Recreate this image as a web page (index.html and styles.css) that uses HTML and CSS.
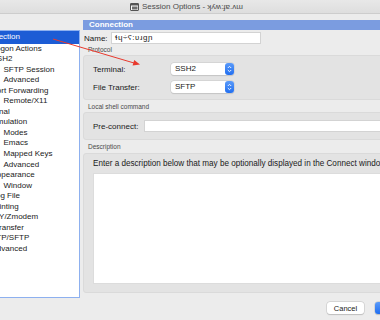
FILE: index.html
```html
<!DOCTYPE html>
<html lang="en">
<head>
  <meta charset="UTF-8" />
  <title>Session Options</title>
  <meta name="viewport" content="width=device-width, initial-scale=1.0" />
  <link rel="stylesheet" href="styles.css">
</head>
<body>
  <div class="window">
    <div class="titlebar">
      <svg class="title-icon" width="9" height="8" viewBox="0 0 9 8">
        <rect x="0.5" y="0.5" width="8" height="7" rx="0.5" fill="#fff" stroke="#555"/>
        <rect x="0.5" y="0.5" width="8" height="2" fill="#555"/>
        <rect x="2" y="3.5" width="5.5" height="3" fill="#6d6d6d"/>
      </svg>
      <span>Session Options - ʞʎʍ:ɟɐ.ʌɯ</span>
    </div>

    <div class="main">
      <ul class="tree">
        <li class="l0 selected">Connection</li>
        <li class="l1">Logon Actions</li>
        <li class="l1">SSH2</li>
        <li class="l2">SFTP Session</li>
        <li class="l2">Advanced</li>
        <li class="l1">Port Forwarding</li>
        <li class="l2">Remote/X11</li>
        <li class="l0">Terminal</li>
        <li class="l1">Emulation</li>
        <li class="l2">Modes</li>
        <li class="l2">Emacs</li>
        <li class="l2">Mapped Keys</li>
        <li class="l2">Advanced</li>
        <li class="l1">Appearance</li>
        <li class="l2">Window</li>
        <li class="l1">Log File</li>
        <li class="l1">Printing</li>
        <li class="l1">X/Y/Zmodem</li>
        <li class="l0">File Transfer</li>
        <li class="l1">FTP/SFTP</li>
        <li class="l1">Advanced</li>
      </ul>

      <div class="panel">
        <div class="panel-header">Connection</div>

        <div class="name-row">
          <label>Name:</label>
          <div class="input name-input">ɬɥ÷ʕ:ʋɹɡɲ</div>
        </div>

        <div class="group-label">Protocol</div>
        <div class="group protocol">
          <div class="field">
            <label>Terminal:</label>
            <div class="select">
              <span class="select-value">SSH2</span>
              <span class="stepper">
                <svg width="9" height="12" viewBox="0 0 9 12">
                  <path d="M2.8 5 L4.5 3.3 L6.2 5 M2.8 7 L4.5 8.7 L6.2 7" fill="none" stroke="#fff" stroke-width="0.9"/>
                </svg>
              </span>
            </div>
          </div>
          <div class="field">
            <label>File Transfer:</label>
            <div class="select">
              <span class="select-value">SFTP</span>
              <span class="stepper">
                <svg width="9" height="12" viewBox="0 0 9 12">
                  <path d="M2.8 5 L4.5 3.3 L6.2 5 M2.8 7 L4.5 8.7 L6.2 7" fill="none" stroke="#fff" stroke-width="0.9"/>
                </svg>
              </span>
            </div>
          </div>
        </div>

        <div class="group-label shell">Local shell command</div>
        <div class="group">
          <div class="field">
            <label class="short">Pre-connect:</label>
            <div class="input wide"></div>
          </div>
        </div>

        <div class="group-label desc">Description</div>
        <div class="group description">
          <p>Enter a description below that may be optionally displayed in the Connect window.</p>
          <div class="textarea"></div>
        </div>
      </div>
    </div>

    <div class="footer">
      <button class="btn">Cancel</button>
      <button class="btn primary">OK</button>
    </div>

    <svg class="arrow" width="380" height="320" viewBox="0 0 380 320">
      <line x1="53" y1="39" x2="134" y2="63" stroke="#e8392e" stroke-width="1"/>
      <polygon points="140,64.6 132.6,65.4 134.2,60" fill="#e8392e"/>
    </svg>
  </div>
</body>
</html>
```

FILE: styles.css
```css
* {
  box-sizing: border-box;
}

body {
  margin: 0;
  width: 380px;
  height: 320px;
  overflow: hidden;
  background: #ececec;
  font-family: "Liberation Sans", Arial, sans-serif;
  font-size: 8px;
  color: #1a1a1a;
}

.window {
  position: relative;
  height: 320px;
}

.titlebar {
  height: 14px;
  background: linear-gradient(#e8e8e8, #dedede);
  border-bottom: 1px solid #cdcdcd;
  display: flex;
  align-items: center;
  gap: 3px;
  padding-left: 130px;
  color: #4c4c4c;
  font-size: 8px;
}

.title-icon {
  flex: none;
}

.main {
  display: flex;
  margin-top: 6px;
  height: 278px;
}

/* left tree */
.tree {
  list-style: none;
  margin: 10px 0 0 -30px;
  padding: 0;
  width: 110px;
  height: 268px;
  background: #fff;
  border: 1.5px solid #8db0ef;
  flex: none;
}

.tree li {
  height: 10.55px;
  line-height: 10.55px;
  white-space: nowrap;
}

.tree .l0 {
  padding-left: 8.5px;
}

.tree .l1 {
  padding-left: 20.5px;
}

.tree .l2 {
  padding-left: 32.5px;
}

.tree .selected {
  height: 12.5px;
  line-height: 12.5px;
  background: #1c5cd5;
  color: #fff;
}

/* right panel */
.panel {
  flex: none;
  width: 330px;
  margin-left: 3px;
}

.panel-header {
  height: 10px;
  line-height: 10px;
  background: #7b9ce0;
  color: #fff;
  font-weight: bold;
  padding-left: 6px;
}

.name-row {
  display: flex;
  align-items: center;
  margin-top: 2px;
  height: 12px;
}

.name-row label {
  width: 28px;
  padding-left: 1px;
}

.input {
  height: 12px;
  line-height: 10px;
  background: #fff;
  border: 1px solid #d3d3d3;
  padding-left: 3px;
}

.name-input {
  width: 150px;
  letter-spacing: 0.5px;
}

.input.wide {
  flex: 1;
}

.group-label {
  height: 11px;
  line-height: 11px;
  font-size: 6.5px;
  color: #4a4a4a;
  padding-left: 5px;
}

.group-label.shell {
  height: 12px;
  line-height: 13px;
}

.group-label.desc {
  height: 13px;
  line-height: 13px;
}

.group {
  background: #e3e3e3;
  border: 1px solid #dadada;
  border-radius: 3px;
  padding: 7px 0 7px 9px;
}

.group.protocol {
  display: flex;
  flex-direction: column;
  gap: 6px;
  padding-bottom: 6px;
}

.field {
  display: flex;
  align-items: center;
  height: 12px;
}

.field label {
  width: 78px;
  flex: none;
}

.field label.short {
  width: 51px;
}

.select {
  display: flex;
  width: 63px;
  height: 12px;
  background: #fff;
  border-radius: 3px;
  box-shadow: 0 0 0 0.5px #c9c9c9, 0 0.5px 1px rgba(0, 0, 0, 0.15);
}

.select-value {
  flex: 1;
  line-height: 12px;
  padding-left: 4px;
}

.stepper {
  width: 9px;
  height: 12px;
  border-radius: 3px;
  background: linear-gradient(#5a9af9, #226ff0);
}

.stepper svg {
  display: block;
}

.description {
  padding-top: 5px;
  padding-bottom: 8px;
}

.description p {
  margin: 0;
  height: 10px;
  line-height: 10px;
  font-size: 8.15px;
  white-space: nowrap;
}

.textarea {
  margin-top: 4px;
  height: 111px;
  background: #fff;
  border: 1px solid #dcdcdc;
}

/* bottom buttons */
.footer {
  display: flex;
  gap: 11px;
  padding: 4px 0 0 327px;
}

.btn {
  flex: none;
  width: 37px;
  height: 12px;
  padding: 0;
  font-family: "Liberation Sans", Arial, sans-serif;
  font-size: 7.5px;
  color: #222;
  background: #fff;
  border: none;
  border-radius: 3px;
  box-shadow: 0 0 0 0.5px #c4c4c4, 0 0.5px 1px rgba(0, 0, 0, 0.2);
}

.btn.primary {
  width: 40px;
  color: #fff;
  background: linear-gradient(#5a9af9, #1f6ef0);
}

.arrow {
  position: absolute;
  left: 0;
  top: 0;
  pointer-events: none;
}
```
